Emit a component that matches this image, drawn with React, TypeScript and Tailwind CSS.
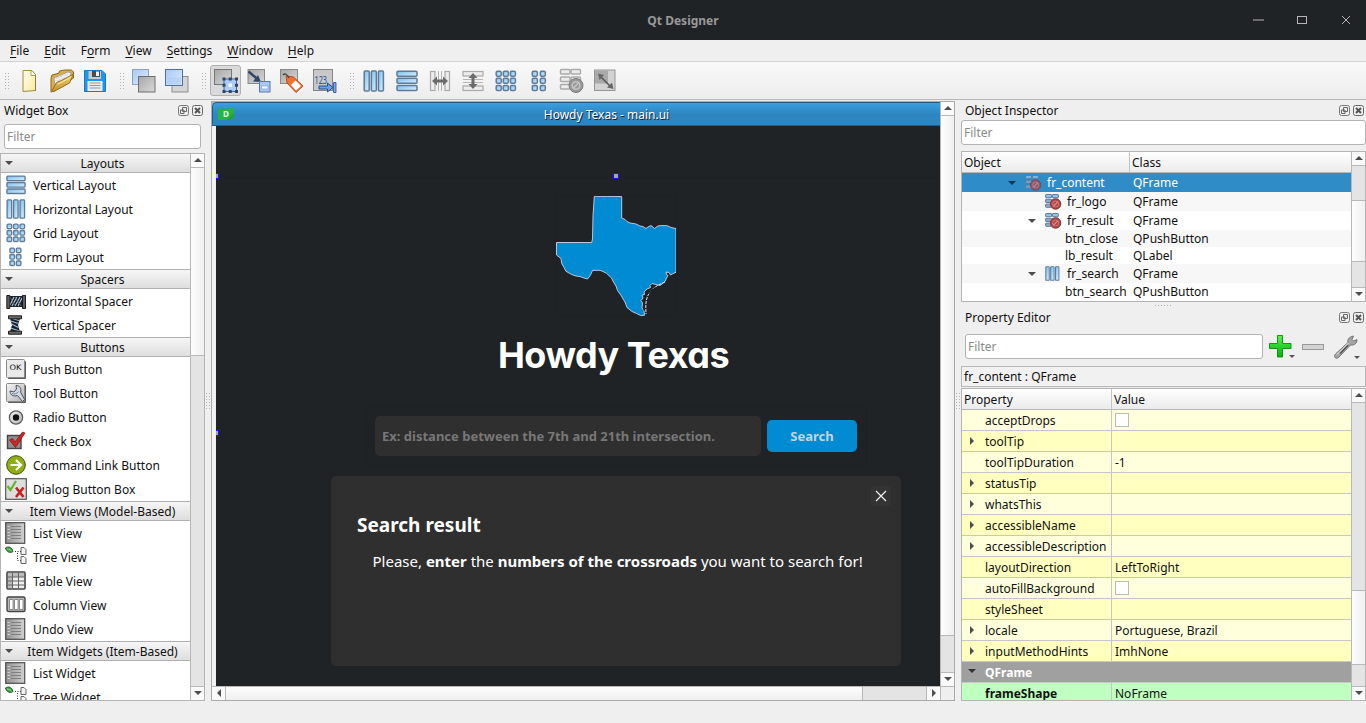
import React from "react";

type Kids = { children?: React.ReactNode };

const Svg = ({ w = 22, h = w, box, children }: Kids & { w?: number; h?: number; box?: string }) => (
  <svg width={w} height={h} viewBox={box ?? `0 0 ${w} ${h}`} className="block shrink-0 overflow-visible">
    {children}
  </svg>
);

const Defs = () => (
  <svg width="0" height="0" className="absolute">
    <defs>
      <linearGradient id="bl" x1="0" y1="0" x2="1" y2="1">
        <stop offset="0" stopColor="#78bde9" />
        <stop offset="1" stopColor="#dcf2ff" />
      </linearGradient>
      <linearGradient id="sq" x1="0" y1="0" x2="1" y2="1">
        <stop offset="0" stopColor="#a9c9f5" />
        <stop offset="1" stopColor="#dcebfd" />
      </linearGradient>
      <linearGradient id="gy" x1="0" y1="0" x2="1" y2="1">
        <stop offset="0" stopColor="#a6a6a6" />
        <stop offset="1" stopColor="#d9d9d9" />
      </linearGradient>
      <linearGradient id="li" x1="0" y1="0" x2="1" y2="0">
        <stop offset="0" stopColor="#8e8e8e" />
        <stop offset="1" stopColor="#d2d2d2" />
      </linearGradient>
      <linearGradient id="lt" x1="0" y1="0" x2="1" y2="1">
        <stop offset="0" stopColor="#f4f4f4" />
        <stop offset="1" stopColor="#b4b4b4" />
      </linearGradient>
      <linearGradient id="yl" x1="0" y1="0" x2="1" y2="1">
        <stop offset="0" stopColor="#fffef0" />
        <stop offset="1" stopColor="#f6ea9c" />
      </linearGradient>
      <linearGradient id="gd" x1="0" y1="0" x2="0" y2="1">
        <stop offset="0" stopColor="#f3d577" />
        <stop offset="1" stopColor="#c4912a" />
      </linearGradient>
      <linearGradient id="gn" x1="0" y1="0" x2="0" y2="1">
        <stop offset="0" stopColor="#5af05a" />
        <stop offset="1" stopColor="#00b400" />
      </linearGradient>
    </defs>
  </svg>
);

/* ---------- layout glyphs ---------- */
const blue = { fill: "url(#bl)", stroke: "#5f7b9a", strokeWidth: 1.5 };
const grey = { fill: "#ececec", stroke: "#aaaaaa", strokeWidth: 1.2 };

const VBox = ({ s = 20 }: { s?: number }) => (
  <Svg w={s} box="0 0 22 22">
    {[1.2, 8.3, 15.4].map((y) => <rect key={y} x="1" y={y} width="20" height="5" rx="1" {...blue} />)}
  </Svg>
);
const HBox = ({ s = 20 }: { s?: number }) => (
  <Svg w={s} box="0 0 22 22">
    {[1.2, 8.3, 15.4].map((x) => <rect key={x} y="1" x={x} height="20" width="5" rx="1" {...blue} />)}
  </Svg>
);
const Grid = ({ s = 20, cols = [1.2, 8.3, 15.4] }: { s?: number; cols?: number[] }) => (
  <Svg w={s} box="0 0 22 22">
    {cols.map((x) => [1.2, 8.3, 15.4].map((y) => <rect key={`${x}-${y}`} x={x} y={y} width="5" height="5" rx="1.2" {...blue} />))}
  </Svg>
);
const Broken = () => (
  <Svg w={16}>
    {[0.5, 5.3, 10.1].map((y) => [0.6, 7.4].map((x) => <rect key={`${x}-${y}`} x={x} y={y} width="6" height="3.2" rx="0.6" fill={y < 4 ? "#8cc6ea" : "#8fabc4"} stroke="#5f7c9c" strokeWidth="1" />))}
    <circle cx="10.600" cy="10" r="5.200" fill="#b84444" stroke="#7f3a42" strokeWidth="1" />
    <circle cx="10.600" cy="10" r="3" fill="none" stroke="#cf7a7a" strokeWidth="1" />
    <path d="m8.500 12.100 4.200-4.200" stroke="#dc9696" strokeWidth="1.200" />
  </Svg>
);

/* ---------- toolbar glyphs ---------- */
const NewFile = () => (
  <Svg w={24}>
    <path d="M6 1.500h9l3.500 4v16L6 22.500z" fill="url(#yl)" stroke="#a08a3c" />
    <path d="M18.500 6v16" stroke="#8d7a3a" />
    <path d="M14 1.500v5h4.500" fill="#fff" stroke="#a08a3c" strokeWidth=".8" />
  </Svg>
);
const OpenFile = () => (
  <Svg w={26} h={24}>
    <path d="m2 9 1-3 4-1 3-1 .500-2 5-1 7 0 2 2v6L5 22l-3 1z" fill="#d9ae4a" stroke="#8b6a1e" />
    <path d="m5 9 14-6 3 1-2 8L6 17z" fill="#f4f4f4" stroke="#999" strokeWidth=".8" />
    <path d="m7 9.500 12-4.500M7.500 12l9-3.500" stroke="#c4c4c4" strokeWidth=".7" />
    <path d="m2.500 22.500 5-9 5-2 12-6.500-4 9L5 22.500z" fill="url(#gd)" stroke="#94701f" />
    <path d="m8.500 15 4.500-2 9-5" stroke="#ffeeb0" fill="none" />
  </Svg>
);
const Save = () => (
  <Svg w={24}>
    <path d="M1.500 1.500H19L22.500 5v17.500h-21z" fill="#1b98ec" stroke="#2277b8" />
    <path d="M5.500 2h12.500v8H5.500z" fill="#c9c9c9" />
    <path d="M9 2h8v6H9z" fill="#4d4d4d" />
    <path d="M13 2.500h3v4.500h-3z" fill="#f4f4f4" />
    <path d="M4.500 12h15v10h-15z" fill="#ececec" />
    <path d="M6.500 14h11M6.500 16.500h11M6.500 19h11" stroke="#999" strokeWidth="1.200" />
  </Svg>
);
const Lower = () => (
  <Svg w={25} h={24}>
    <rect x="1.500" y="0.500" width="16" height="15" fill="url(#sq)" stroke="#8fa2bd" />
    <rect x="7.500" y="7.500" width="16.500" height="15.500" fill="url(#gy)" stroke="#6e6e6e" />
  </Svg>
);
const Raise = () => (
  <Svg w={25} h={24}>
    <rect x="8" y="7.500" width="16" height="15.500" fill="#d5d5d5" stroke="#8d8d8d" />
    <rect x="1.500" y="0.500" width="17" height="16" fill="url(#sq)" stroke="#53719c" />
    <rect x="3" y="8.500" width="14" height="7" fill="#a3c6f5" opacity=".5" />
  </Svg>
);
const EditWidgets = () => (
  <Svg w={24}>
    <rect x="0.500" y="0.500" width="17" height="15" fill="url(#gy)" stroke="#777" />
    <rect x="10" y="10" width="12.500" height="12.500" fill="#a9ccfb" stroke="#4b668c" />
    {[10, 16.25, 22.5].map((x) => [10, 16.25, 22.5].map((y) => (x === 16.25 && y === 16.25 ? null : <rect key={`${x}-${y}`} x={x - 1.5} y={y - 1.5} width="3" height="3" fill="#2d4567" />)))}
    <rect x="14.500" y="14.500" width="3.500" height="3.500" fill="#f4f9ff" />
  </Svg>
);
const Signals = () => (
  <Svg w={25} h={24}>
    <rect x="2" y="0.500" width="16.500" height="14" fill="url(#gy)" stroke="#8a8a8a" />
    <path d="m2.500 2.500 9.500 8" stroke="#304865" strokeWidth="2.400" />
    <path d="m15 13-8-.5 5-6.500z" fill="#304865" />
    <rect x="13.500" y="12.500" width="10.500" height="10.500" fill="#a9c9f5" stroke="#5778a5" />
    <path d="M15.500 17h6.500v3h-6.500z" fill="#f4f9ff" stroke="#7699c8" strokeWidth=".6" />
  </Svg>
);
const Buddies = () => (
  <Svg w={25} h={24}>
    <rect x="1.500" y="0.500" width="17" height="14" fill="url(#gy)" stroke="#8a8a8a" />
    <path d="m7 7 7.500 1 9.500 9-7 6.500-9-9.500z" fill="#ef7330" stroke="#a33a18" strokeWidth=".8" />
    <path d="m16.500 11.500 5.500 5.500-5 4.500-5-5.500z" fill="#fff" />
    <path d="M4 6c2-2 4-1 6 3" stroke="#444" fill="none" strokeWidth="1.300" />
  </Svg>
);
const TabOrder = () => (
  <Svg w={26} h={24}>
    <rect x="1.500" y="0.500" width="19" height="21" fill="#c8c8c8" stroke="#858585" />
    <text x="2.500" y="15" fontSize="10.500" fontFamily="Noto Sans" fill="#244f93" textLength="12.500" lengthAdjust="spacingAndGlyphs">123</text>
    <path d="M7 17h8.500v-3l5.500 4.500-5.500 4.500v-3H7z" fill="#6f9fe0" stroke="#274f8d" />
    <path d="M21.500 13.500H24v10h-2.500z" fill="#7da8e4" stroke="#274f8d" strokeWidth=".8" />
  </Svg>
);
const HSplit = () => (
  <Svg w={22}>
    <rect x="1.500" y="1.500" width="4.500" height="19" {...grey} />
    <rect x="16" y="1.500" width="4.500" height="19" {...grey} />
    <path d="M9.500 1v20M12.500 1v20" stroke="#b5b5b5" />
    <path d="m3 11 5-4.500V9.500h6V6.500l5 4.500-5 4.500v-3H8v3z" fill="#6b6b6b" />
  </Svg>
);
const VSplit = () => (
  <Svg w={22}>
    <rect y="1.500" x="1" height="4.500" width="20" {...grey} />
    <rect y="16" x="1" height="4.500" width="20" {...grey} />
    <path d="M1 9.500h20M1 12.500h20" stroke="#b5b5b5" />
    <path d="m11 3 4.500 5H12.500v6h3L11 19l-4.500-5h3V8h-3z" fill="#6b6b6b" />
  </Svg>
);
const Break = () => (
  <Svg w={26} h={24}>
    {[0, 7.5, 15].map((y) => [1.5, 12].map((x) => <rect key={`${x}-${y}`} x={x} y={y + 0.5} width="9.500" height="4.500" rx="1" {...grey} strokeWidth="1.500" />))}
    <circle cx="17" cy="16.500" r="7" fill="#989898" stroke="#7c7c7c" />
    <circle cx="17" cy="16.500" r="3.800" fill="none" stroke="#c4c4c4" strokeWidth="1.600" />
    <path d="m14 19.500 6-6" stroke="#c4c4c4" strokeWidth="1.600" />
  </Svg>
);
const Adjust = () => (
  <Svg w={24}>
    <rect x="1.500" y="1" width="20.500" height="20.500" fill="#d2d2d2" stroke="#959595" />
    <rect x="2" y="1.500" width="13" height="13" fill="#a9a9a9" />
    <path d="m7 7 10 10" stroke="#555" strokeWidth="1.500" />
    <path d="m5 4.500 6 1.500-4.500 5zM20.500 20l-6.500-1.500 5-5z" fill="#666" />
  </Svg>
);

/* ---------- widget glyphs ---------- */
const HSpacer = () => (
  <Svg w={20}>
    <path d="M4 5h12v11H4z" fill="#17202a" />
    <path d="m4 14 4-8m-2 9 5-9m-2 9 5-9m-2 9 4-8" stroke="#b9cbd8" strokeWidth="1.100" />
    <path d="m4 6 5 9m0-9 6 9" stroke="#536b7e" />
    <path d="M.8 4.500h3v13h-3zM16.500 4.500h3v13h-3z" fill="#5e5e5e" stroke="#1d1d1d" />
  </Svg>
);
const VSpacer = () => (
  <Svg w={20}>
    <path d="M4 3h10l-2 7 2 7H4l2-7z" fill="#17202a" />
    <path d="m4.500 6 8 2.500m-7 .5 7 3.500m-8 .5 9 3M6 3.500l7 2" stroke="#a3bccd" strokeWidth="1.200" />
    <path d="M2.500.800h13v3h-13zM2.500 16.200h13v3h-13z" fill="#6a6a6a" stroke="#1d1d1d" />
  </Svg>
);
const Tile = ({ children }: Kids) => (
  <Svg w={20}>
    <rect x="2" y="2" width="18" height="18" rx="1" fill="#333" opacity=".8" />
    <rect x=".5" y=".5" width="18" height="18" rx="1" fill="url(#lt)" stroke="#8a8a8a" />
    {children}
  </Svg>
);
const PushIcon = () => (
  <Tile>
    <rect x="1" y="1" width="17" height="17" fill="#e9e9e9" />
    <text x="3.500" y="11" fontSize="7.500" fontFamily="DejaVu Sans" fill="#111" textLength="12" lengthAdjust="spacingAndGlyphs">OK</text>
  </Tile>
);
const ToolIcon = () => (
  <Tile>
    <path d="M10 2.500c4 0 6 3.500 4.500 6.500l4 7.500-2 2-5-6c-4 1.500-7.500-.5-7.500-4.500l4 1 2.500-3z" fill="#d3d9e2" stroke="#4c525c" />
    <path d="M6 10.500c2 1 5 .5 6.500-2" stroke="#7c8798" fill="none" />
  </Tile>
);
const RadioIcon = () => (
  <Svg w={20}>
    <circle cx="10" cy="10.500" r="6.600" fill="url(#lt)" stroke="#5c5c5c" strokeWidth="1.300" />
    <circle cx="10" cy="10.500" r="3.200" fill="#111" />
  </Svg>
);
const CheckIcon = () => (
  <Svg w={20}>
    <rect x="1.500" y="4.500" width="13.500" height="13" fill="#8f8f8f" stroke="#444" strokeWidth="1.400" />
    <path d="m3.500 9 3-1.500 2.500 3.500L16.500 1 19 2 9.500 16.500z" fill="#d32323" stroke="#7d1010" strokeWidth=".7" />
  </Svg>
);
const LinkIcon = () => (
  <Svg w={20}>
    <circle cx="10" cy="10" r="9.300" fill="#8fae12" stroke="#3f4a17" />
    <path d="M4.500 10H15M10 5l5 5-5 5" fill="none" stroke="#fff" strokeWidth="2.200" />
  </Svg>
);
const DialogIcon = () => (
  <Svg w={22}>
    <rect x=".7" y=".7" width="20.600" height="20.600" fill="#dedede" stroke="#555" strokeWidth="1.200" />
    <path d="m2.500 8 3 4L11 3" fill="none" stroke="#61b52b" strokeWidth="2.200" />
    <path d="m11 9.500 7.500 9.500m0-9.500L11 19" stroke="#c72020" strokeWidth="2.600" />
  </Svg>
);
const ListIcon = () => (
  <Svg w={21} h={22}>
    <rect x=".7" y=".7" width="19" height="20.600" fill="url(#li)" stroke="#4d4d4d" strokeWidth="1.200" />
    <path d="M2.500 4.500H5M2.500 7.500H5M2.500 10.500H5M2.500 13.500H5M2.500 16.500H5" stroke="#d0d0d0" />
    <path d="M6 4.500h10M6 7.500h10M6 10.500h10M6 13.500h10M6 16.500h10" stroke="#808080" />
  </Svg>
);
const TreeIcon = () => (
  <Svg w={22}>
    <path d="M.500 2c3-2 6-1 7.500 3.500-3 2-6.500.500-7.500-3.500z" fill="#3fa644" stroke="#1d4d20" />
    <path d="M2 3c2 0 4 1 5 2.500" stroke="#a7e6a9" fill="none" strokeWidth=".8" />
    <path d="M10 5.500h6M12.500 7v7.500H16" fill="none" stroke="#333" strokeDasharray="1 1.500" />
    <path d="M16 1.500h3l2 2v5h-5zM16 10.500h3l2 2v5h-5z" fill="#f2f2f2" stroke="#666" />
  </Svg>
);
const TableIcon = () => (
  <Svg w={20}>
    <rect x="1" y="1" width="18" height="17" rx="1" fill="#eee" stroke="#444" strokeWidth="1.600" />
    <path d="M2 2h4v15H2zM2 2h16v4H2z" fill="#bbb" />
    <path d="M2 6h16M2 10h16M2 14h16M6.500 2v15M12.500 2v15" stroke="#666" />
  </Svg>
);
const ColumnIcon = () => (
  <Svg w={20}>
    <rect x="1" y="2" width="18" height="14.500" rx="1.500" fill="#bbb" stroke="#444" strokeWidth="1.400" />
    <path d="M3.500 4.500h3.500v10H3.500zM8.500 4.500h3.500v10H8.500zM13.500 4.500h3.500v10h-3.500z" fill="#fff" stroke="#777" strokeWidth=".8" />
  </Svg>
);

/* ---------- shared parts ---------- */
const Tri = ({ dir, color = "#4d4d4d" }: { dir: "up" | "down" | "left" | "right"; color?: string }) => {
  const d = { up: "M0 6 4 2l4 4z", down: "M0 2h8L4 6z", left: "M6 0v8L2 4z", right: "M2 0v8l4-4z" }[dir];
  return <Svg w={8}><path d={d} fill={color} /></Svg>;
};

const Dock = ({ title }: { title: string }) => (
  <div className="flex h-[20px] items-center justify-between pl-1 pr-[2px]">
    <span>{title}</span>
    <span className="flex gap-[3px]">
      <Svg w={11}>
        <rect x=".5" y=".5" width="10" height="10" rx="2" fill="none" stroke="#777" />
        <path d="M4.500 2.500h4v4h-4zM2.500 5h3.500v3.500H2.500z" fill="#efefef" stroke="#666" />
      </Svg>
      <Svg w={11}>
        <rect x=".5" y=".5" width="10" height="10" rx="2" fill="none" stroke="#666" />
        <path d="m3 3 5 5m0-5L3 8" stroke="#555" strokeWidth="2" />
      </Svg>
    </span>
  </div>
);

const Filter = ({ className }: { className: string }) => (
  <div className={`flex items-center rounded-[3px] border border-[#b3b3b3] bg-white px-[2px] text-[#8a8a8a] ${className}`}>Filter</div>
);

const Btn = ({ dir, edge }: { dir: "up" | "down" | "left" | "right"; edge: string }) => (
  <div className={`flex shrink-0 items-center justify-center border-[#b8b8b8] bg-[#fafafa] ${edge}`}><Tri dir={dir} /></div>
);

/* Vertical bar: heights of the space above the thumb and of the thumb itself */
const VBar = ({ before, thumb }: { before: string; thumb: string }) => (
  <div className="flex w-[14px] shrink-0 flex-col border-l border-[#b8b8b8] bg-[#e4e4e4]">
    <Btn dir="up" edge="h-[14px] border-b pb-[2px]" />
    <div className={before} />
    <div className={`border-b border-[#b8b8b8] bg-linear-to-r from-[#fdfdfd] to-[#efefef] ${thumb}`} />
    <div className="flex-1" />
    <Btn dir="down" edge="h-[14px] border-t pb-[2px]" />
  </div>
);

const Grip = () => (
  <Svg w={4} h={18}>
    {[1, 4, 7, 10, 13, 16].map((y) => <path key={y} d={`M0 ${y + 0.5}h1M3 ${y + 0.5}h1`} stroke="#b4b4b4" />)}
  </Svg>
);

/* ---------- widget box ---------- */
const sections: { name: string; items: [string, React.ReactNode][] }[] = [
  { name: "Layouts", items: [["Vertical Layout", <VBox />], ["Horizontal Layout", <HBox />], ["Grid Layout", <Grid />], ["Form Layout", <Grid cols={[4.3, 11.4]} />]] },
  { name: "Spacers", items: [["Horizontal Spacer", <HSpacer />], ["Vertical Spacer", <VSpacer />]] },
  { name: "Buttons", items: [["Push Button", <PushIcon />], ["Tool Button", <ToolIcon />], ["Radio Button", <RadioIcon />], ["Check Box", <CheckIcon />], ["Command Link Button", <LinkIcon />], ["Dialog Button Box", <DialogIcon />]] },
  { name: "Item Views (Model-Based)", items: [["List View", <ListIcon />], ["Tree View", <TreeIcon />], ["Table View", <TableIcon />], ["Column View", <ColumnIcon />], ["Undo View", <ListIcon />]] },
  { name: "Item Widgets (Item-Based)", items: [["List Widget", <ListIcon />], ["Tree Widget", <TreeIcon />]] },
];

const WidgetBox = () => (
  <div className="flex w-[205px] shrink-0 flex-col">
    <Dock title="Widget Box" />
    <Filter className="mx-1 mt-1 h-[25px]" />
    <div className="mt-1 flex h-[548px] overflow-hidden border border-[#b4b4b4] bg-white">
      <div className="-mt-px min-w-0 flex-1">
        {sections.map((s) => (
          <div key={s.name}>
            <div className="flex h-5 items-center border-y border-[#b0b0b0] bg-linear-to-b from-[#f6f6f6] to-[#dedede] pl-[4px]">
              <Tri dir="down" />
              <span className="flex-1 pl-[2px] pt-[2px] text-center leading-[18px]">{s.name}</span>
            </div>
            {s.items.map(([name, icon]) => (
              <div key={name} className="flex h-6 items-center">
                <div className="flex w-[30px] justify-center pr-px">{icon}</div>
                <span className="pl-[2px]">{name}</span>
              </div>
            ))}
          </div>
        ))}
      </div>
      <VBar before="h-0" thumb="h-[188px]" />
    </div>
  </div>
);

/* ---------- form canvas ---------- */
const texas =
  "M38.300.300 65.700.500V22L69 23.500 71 25.500 74 27 80 28 84 30 87 30.500 90 32.500 92 31 95 29.500 98.500 32.500 102 30 105.500 29.500 111.500 29.800 115 31.500 120 32.500V76.300L117 77.500 114.500 79 113 76.500 110 76 110.500 78.500 112 79.500 110.500 82 109 85.500 106 88 104 89.500 102 89 98 88 96 87.500 94 89.500 94.500 91.500 91 93 88 96 88.500 98.500 86 99 87 102 85 104.500 86.500 107 86 112 88 115 88.500 119.300 84.500 119.500 80.500 117.500 76 115.500 71 111.500 69 106 67 103 65.500 100 61.500 94.500 60 90 57.500 86 55.500 82 50.500 77.300 47 75.500 44 74.300 36.500 74.500 34.500 79 31.500 83 28 82 24 80.500 20 80 15.700 78.500 10 75.300 8 71.500 5.700 67.500 5 62.500 .500 59V46.500H35.700L36.500 43 37 20z";

const Handle = ({ at }: { at: string }) => <div className={`absolute z-10 h-[6px] w-[6px] border border-[#1414f0] bg-[#a4a4b4] ${at}`} />;

const Canvas = () => (
  <div className="relative flex h-[560px] flex-1 flex-col overflow-hidden bg-[#202326] text-white">
    <Handle at="left-[397px] top-[47px]" />
    <Handle at="-left-[3px] top-[47px]" />
    <Handle at="-left-[3px] top-[304px]" />
    <div className="h-[51px] shrink-0 border-b border-dotted border-[#1c1f21]" />
    <div className="ml-[340px] mt-[19px] h-[120px] w-[120px] shrink-0 border border-dotted border-[#1b1e20]">
      <svg width="120" height="120" viewBox="0 0 120 120" className="-ml-px -mt-px block">
        <path d={texas} fill="#008bd2" stroke="#d0d0e6" strokeWidth="0.900" />
        <path d="M109 86c-8 3-16 8-18 16-2 6-1 11-1 16" fill="none" stroke="#e8e8f4" strokeDasharray="3 1" />
        <path d="M103 90.500c-8 3-13 7-14.500 13l-.5 11" fill="none" stroke="#202326" strokeWidth="1.300" />
      </svg>
    </div>
    <h1 className="ml-[282px] mt-[16px] h-[46px] shrink-0 whitespace-nowrap font-[Inter,sans-serif] text-[36px] font-bold leading-[47px] tracking-[-0.520px] [font-feature-settings:'cv11']">Howdy Texas</h1>
    <div className="ml-[150px] mt-[28px] flex h-[60px] w-[501px] shrink-0 items-center gap-[6px] border border-dotted border-[#1b1e20] pl-2 font-bold">
      <div className="flex h-10 w-[386px] items-center rounded-[5px] bg-[#2f2f2f] pl-[7px] text-[13px] text-[#777]">Ex: distance between the 7th and 21th intersection.</div>
      <button className="h-8 w-[90px] rounded-[5px] bg-[#008bd2] text-[13px] text-[#c5d3de]">Search</button>
    </div>
    <div className="ml-[115px] mt-[10px] h-[190px] w-[570px] shrink-0 rounded-[5px] bg-[#2f2f2f]">
      <div className="flex justify-end pr-[10px] pt-[10px]">
        <div className="flex h-5 w-5 items-center justify-center rounded bg-[#343434]">
          <Svg w={10}><path d="m0 0 10 10m0-10-10 10" stroke="#f2f2f2" strokeWidth="1.200" /></Svg>
        </div>
      </div>
      <h2 className="ml-[26px] mt-[5px] text-[19px] font-bold leading-[28px]">Search result</h2>
      <p className="mt-[11px] whitespace-nowrap pl-[41.5px] text-[15px] leading-[22px]">
        Please, <b>enter</b> the <b>numbers of the crossroads</b> you want to search for!
      </p>
    </div>
  </div>
);

const FormArea = () => (
  <div className="mt-px flex h-[600px] w-[744px] shrink-0 flex-col border border-[#aaa] bg-[#b0b0b0]">
    <div className="flex h-[584px]">
      <div className="flex w-[728px] flex-col">
        <div className="flex h-[24px] items-center rounded-tl-[5px] border-b border-l border-t border-[#1e5f8e] bg-linear-to-b from-[#3a9fe0] via-[#2d86c0] to-[#2d86c0] pl-[5px] text-white">
          <Svg w={16} h={12}>
            <path d="m0 0 3 1L16 0v9l-3 3H0z" fill="#27b344" />
            <path d="m9 12 7-7v4l-3 3z" fill="#1fa03a" />
            <text x="5" y="9" fontSize="8" fontWeight="bold" fontFamily="Noto Sans" fill="#eaffea">D</text>
          </Svg>
          <span className="flex-1 pl-[39px] text-center [text-shadow:1px_1px_0_#123]">Howdy Texas - main.ui</span>
        </div>
        <div className="flex flex-1">
          <div className="w-[4px] border-r border-[#eee] bg-[#f2f2f2]" />
          <Canvas />
        </div>
      </div>
      <VBar before="h-0" thumb="h-[520px]" />
    </div>
    <div className="flex h-[14px] border-t border-[#b8b8b8] bg-[#e4e4e4]">
      <Btn dir="left" edge="w-[14px] border-r pb-px" />
      <div className="w-[637px] border-r border-[#b8b8b8] bg-linear-to-b from-[#fdfdfd] to-[#efefef]" />
      <div className="w-[63px]" />
      <Btn dir="right" edge="w-[15px] border-x pb-px" />
      <div className="flex-1 bg-[#efefef]" />
    </div>
  </div>
);

/* ---------- object inspector ---------- */
const objects: { name: string; cls: string; h: string; pad: string; open?: boolean; icon?: React.ReactNode }[] = [
  { name: "fr_content", cls: "QFrame", h: "h-[19px] bg-[#308cc6] text-white", pad: "pl-[46px]", open: true, icon: <span className="block opacity-75"><Broken /></span> },
  { name: "fr_logo", cls: "QFrame", h: "h-[19px] bg-[#f7f7f7]", pad: "pl-[83px]", icon: <Broken /> },
  { name: "fr_result", cls: "QFrame", h: "h-[19px]", pad: "pl-[66px]", open: true, icon: <Broken /> },
  { name: "btn_close", cls: "QPushButton", h: "h-[17px] bg-[#f7f7f7]", pad: "pl-[103px]" },
  { name: "lb_result", cls: "QLabel", h: "h-[17px]", pad: "pl-[103px]" },
  { name: "fr_search", cls: "QFrame", h: "h-[19px] bg-[#f7f7f7]", pad: "pl-[66px]", open: true, icon: <HBox s={15} /> },
  { name: "btn_search", cls: "QPushButton", h: "h-[17px]", pad: "pl-[103px]" },
];

const HeadRow = ({ a, b, w }: { a: string; b: string; w: string }) => (
  <div className="flex h-[21px] items-center border-b border-[#b8b8b8] bg-linear-to-b from-white to-[#ebebeb]">
    <div className={`flex h-full shrink-0 items-center border-r border-[#c4c4c4] pl-[2px] ${w}`}>{a}</div>
    <div className="pl-[2px]">{b}</div>
  </div>
);

const Inspector = () => (
  <>
    <Dock title="Object Inspector" />
    <Filter className="h-[25px]" />
    <div className="mt-[6px] flex h-[151px] border border-[#b4b4b4] bg-white">
      <div className="flex-1 overflow-hidden">
        <HeadRow a="Object" b="Class" w="w-[168px]" />
        {objects.map((o) => (
          <div key={o.name} className={`flex items-center whitespace-nowrap ${o.h}`}>
            <div className={`flex w-[171px] items-center ${o.pad}`}>
              {o.open && <span className="mr-[9px]"><Tri dir="down" color={o.name === "fr_content" ? "#12384f" : "#4d4d4d"} /></span>}
              {o.icon && <span className="mr-[6px] w-[16px]">{o.icon}</span>}
              {o.name}
            </div>
            <div>{o.cls}</div>
          </div>
        ))}
      </div>
      <VBar before="h-[34px]" thumb="h-[62px] border-t" />
    </div>
  </>
);

/* ---------- property editor ---------- */
const props: { name: string; value?: string; more?: boolean; check?: boolean }[] = [
  { name: "acceptDrops", check: true },
  { name: "toolTip", more: true },
  { name: "toolTipDuration", value: "-1" },
  { name: "statusTip", more: true },
  { name: "whatsThis", more: true },
  { name: "accessibleName", more: true },
  { name: "accessibleDescription", more: true },
  { name: "layoutDirection", value: "LeftToRight" },
  { name: "autoFillBackground", check: true },
  { name: "styleSheet" },
  { name: "locale", value: "Portuguese, Brazil", more: true },
  { name: "inputMethodHints", value: "ImhNone", more: true },
];

const Editor = () => (
  <>
    <Dock title="Property Editor" />
    <div className="mt-[7px] flex h-[25px] items-center pl-1">
      <Filter className="h-[25px] w-[298px]" />
      <div className="ml-[6px] flex items-end">
        <Svg w={23}><path d="M8.500.500h5V8.500H22v5h-8.500V22h-5v-8.500H.500v-5h8z" fill="url(#gn)" stroke="#129612" /></Svg>
        <span className="-mb-[2px] -ml-[3px]"><Svg w={6} h={6}><path d="M0 1h6L3 4z" fill="#555" /></Svg></span>
      </div>
      <div className="ml-[7px] h-[6px] w-[22px] border border-[#999] bg-[#d4d4d4]" />
      <div className="ml-[10px] flex items-end">
        <Svg w={24}>
          <path d="M1 22.500c-1-1.500-.5-2.500.5-3.500L14 7.500c-1-3 1-5.500 5.500-6.500L18 4.500l1.500 1.500 3.500-1.500c0 4-2.500 6-6.500 5.500L5 22c-1.500 1.500-3 1.500-4 .5z" fill="#a5a5a5" stroke="#6c6c6c" strokeWidth=".9" />
          <path d="M6 18.500 14 10" stroke="#4f4f4f" strokeWidth="1.600" />
          <path d="M3 19.500 14.500 8" stroke="#f0f0f0" strokeWidth="1" />
        </Svg>
        <span className="-mb-[2px] -ml-[4px]"><Svg w={6} h={6}><path d="M0 1h6L3 4z" fill="#555" /></Svg></span>
      </div>
    </div>
    <div className="mt-[7px] flex h-[21px] items-center border border-[#b8b8b8] bg-[#f1f1f1] pl-[2px]">fr_content : QFrame</div>
    <div className="mt-px flex h-[313px] border border-[#b4b4b4] bg-white">
      <div className="flex-1 overflow-hidden">
        <HeadRow a="Property" b="Value" w="w-[150px]" />
        {props.map((p) => (
          <div key={p.name} className="flex h-[21px] items-stretch border-b border-[#c6c6c6] odd:bg-[#ffffbf] even:bg-[#ffffdc]">
            <div className="flex w-[150px] shrink-0 items-center border-r border-[#c6c6c6] pl-[6px]">
              <span className="w-[17px]">{p.more && <Tri dir="right" />}</span>
              {p.name}
            </div>
            <div className="flex items-center pl-[3px]">
              {p.check ? <span className="h-[14px] w-[14px] border border-[#bbb] bg-white" /> : p.value}
            </div>
          </div>
        ))}
        <div className="flex h-[21px] items-center border-b border-[#c6c6c6] bg-[#a0a0a0] pl-[6px] font-bold text-white">
          <span className="w-[17px] pb-[2px]"><Tri dir="down" color="#333" /></span>QFrame
        </div>
        <div className="flex h-[17px] bg-[#bfffbf] leading-[22px]">
          <div className="w-[150px] shrink-0 border-r border-[#c6c6c6] pl-[23px] font-bold">frameShape</div>
          <div className="pl-[3px]">NoFrame</div>
        </div>
      </div>
      <VBar before="h-[187px]" thumb="h-[75px] border-t" />
    </div>
  </>
);

/* ---------- chrome ---------- */
const menus: [string, string, string][] = [["", "F", "ile"], ["", "E", "dit"], ["F", "o", "rm"], ["", "V", "iew"], ["", "S", "ettings"], ["", "W", "indow"], ["", "H", "elp"]];

const Tool = ({ children, on }: Kids & { on?: boolean }) => (
  <div className={`flex h-[31px] w-[31px] shrink-0 items-center justify-center ${on ? "rounded-[3px] border border-[#b0b0b0] bg-[#dadada]" : ""}`}>{children}</div>
);

export default function App() {
  return (
    <div className="flex h-[723px] w-[1366px] flex-col overflow-hidden bg-[#efefef] font-['Noto_Sans',sans-serif] text-[12px] leading-[17px] text-[#111]">
      <Defs />
      <header className="flex h-10 shrink-0 items-center bg-[#202326]">
        <div className="w-[140px]" />
        <div className="flex-1 text-center font-bold text-[#999]">Qt Designer</div>
        <div className="flex w-[140px] items-center justify-end gap-[33px] pr-[15px]">
          <Svg w={11}><path d="M0 5h11" stroke="#b5b5b5" /></Svg>
          <Svg w={11}><rect x=".5" y="1.500" width="9" height="7" fill="none" stroke="#b5b5b5" /></Svg>
          <Svg w={10}><path d="m1 1 8 8m0-8-8 8" stroke="#b5b5b5" /></Svg>
        </div>
      </header>
      <nav className="flex h-[22px] shrink-0 items-center gap-[15px] border-b border-[#d4d4d4] pl-[10px]">
        {menus.map(([a, u, b]) => <span key={a + u + b}>{a}<span className="underline underline-offset-2">{u}</span>{b}</span>)}
      </nav>
      <div className="flex h-[38px] shrink-0 items-center border-b border-[#b8b8b8] bg-linear-to-b from-[#f9f9f9] to-[#ededed] pl-[5px]">
        <Grip />
        <div className="ml-[4px] flex gap-[2px]"><Tool><NewFile /></Tool><Tool><OpenFile /></Tool><Tool><Save /></Tool></div>
        <div className="ml-[10px]"><Grip /></div>
        <div className="ml-[4px] flex gap-[2px]"><Tool><Lower /></Tool><Tool><Raise /></Tool></div>
        <div className="ml-[10px]"><Grip /></div>
        <div className="ml-[4px] flex gap-[2px]"><Tool on><EditWidgets /></Tool><Tool><Signals /></Tool><Tool><Buddies /></Tool><Tool><TabOrder /></Tool></div>
        <div className="ml-[10px]"><Grip /></div>
        <div className="ml-[4px] flex gap-[2px]">
          <Tool><HBox s={22} /></Tool><Tool><VBox s={22} /></Tool><Tool><HSplit /></Tool><Tool><VSplit /></Tool>
          <Tool><Grid s={22} /></Tool><Tool><Grid s={22} cols={[4.3, 12.3]} /></Tool><Tool><Break /></Tool><Tool><Adjust /></Tool>
        </div>
      </div>
      <main className="flex">
        <WidgetBox />
        <div className="flex w-[6px] items-center justify-center"><Grip /></div>
        <FormArea />
        <div className="flex w-[6px] items-center justify-center"><Grip /></div>
        <aside className="flex w-[405px] shrink-0 flex-col">
          <Inspector />
          <div className="flex h-[5px] items-center justify-center">
            <Svg w={18} h={4}><path d="M0 2.500h18" stroke="#b0b0b0" strokeDasharray="1 2" /></Svg>
          </div>
          <Editor />
        </aside>
      </main>
    </div>
  );
}
